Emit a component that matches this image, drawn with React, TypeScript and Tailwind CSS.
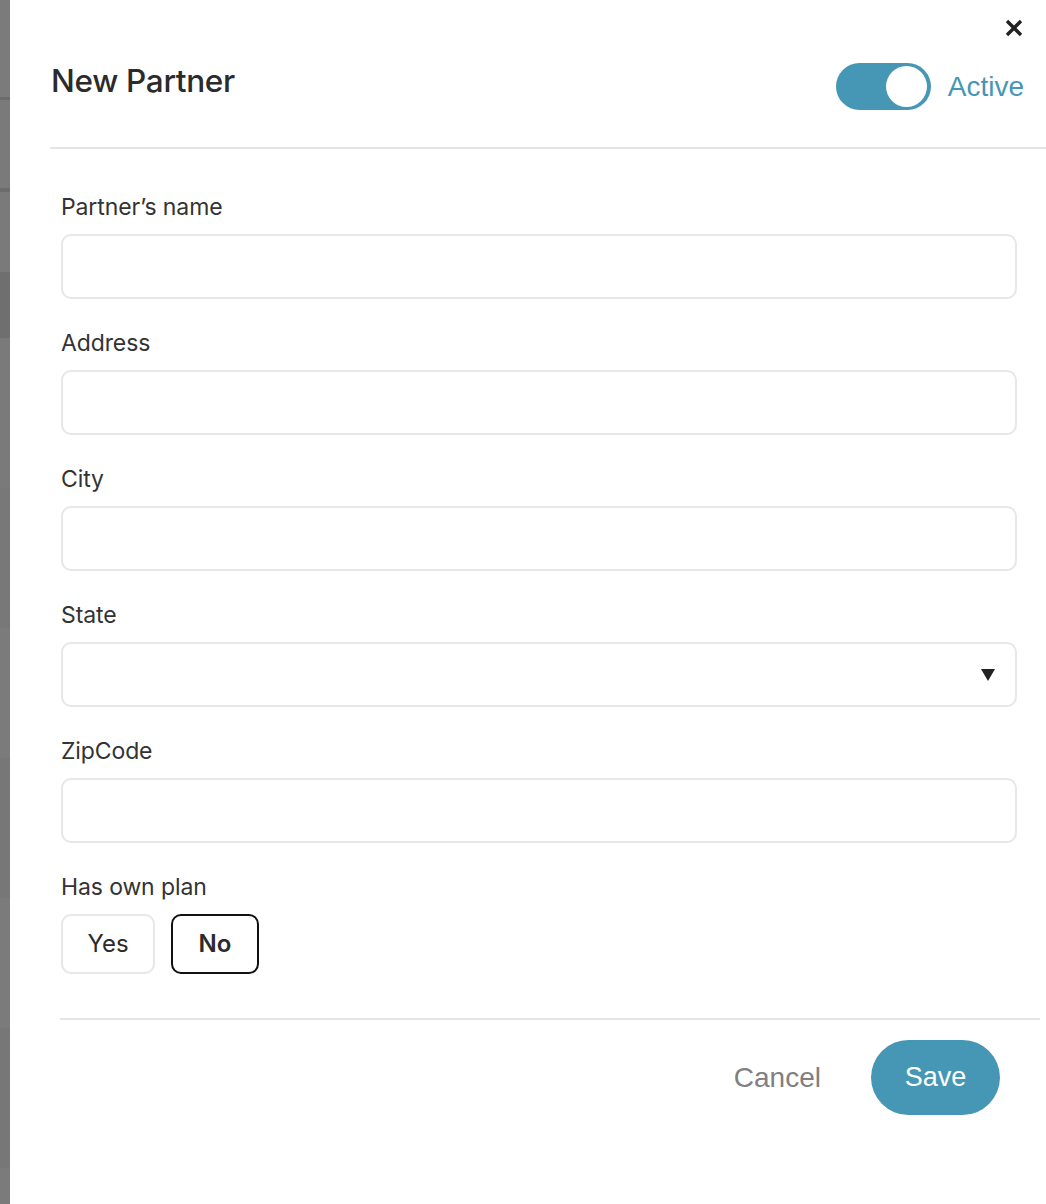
import React from "react";

const inter = { fontFamily: "Inter, 'Noto Sans', sans-serif" };

function Field({ label, select }: { label: string; select?: boolean }) {
  return (
    <div className="flex flex-col">
      <label className="block text-[23px] leading-[28px] text-[#333333] mb-[13px] tracking-[-0.005em]">{label}</label>
      <div className="relative flex items-center h-[65px] w-full rounded-[10px] border-2 border-[#e7e7e7] bg-white">
        {select && (
          <svg className="absolute right-[20px]" width="14" height="12" viewBox="0 0 14 12">
            <path d="M0 0 L14 0 L7 12 Z" fill="#222222" />
          </svg>
        )}
      </div>
    </div>
  );
}

export default function App() {
  return (
    <div className="flex w-full h-[1204px] overflow-hidden" style={inter}>
      <div className="w-[10px] flex flex-col bg-[#7a7a7a]">
        <div className="h-[97px] bg-[#7b7b7b]" />
        <div className="h-[3px] bg-[#6c6c6c]" />
        <div className="h-[88px] bg-[#7a7a7a]" />
        <div className="h-[4px] bg-[#6c6c6c]" />
        <div className="h-[80px] bg-[#7a7a7a]" />
        <div className="h-[66px] bg-[#6f6f6f]" />
        <div className="h-[150px] bg-[#7a7a7a]" />
        <div className="h-[140px] bg-[#787878]" />
        <div className="h-[130px] bg-[#7b7b7b]" />
        <div className="h-[140px] bg-[#777777]" />
        <div className="h-[130px] bg-[#7b7b7b]" />
        <div className="h-[140px] bg-[#777777]" />
        <div className="flex-1 bg-[#7b7b7b]" />
      </div>
      <div className="flex-1 flex flex-col bg-white">
        <div className="flex justify-end pt-[19px] pr-[23px] h-[40px]">
          <button className="w-[18px] h-[18px]">
            <svg width="18" height="18" viewBox="0 0 18 18">
              <path d="M2 2 L16 16 M16 2 L2 16" stroke="#222222" strokeWidth="3.4" strokeLinecap="butt" />
            </svg>
          </button>
        </div>
        <div className="ml-[40px] flex items-start justify-between border-b-2 border-[#e2e5e9] pb-[37px] pr-[22px]">
          <h1 className="mt-[23px] ml-[1px] text-[31.5px] leading-[36px] font-medium text-[#2b2b2b] tracking-[-0.01em]">New Partner</h1>
          <div className="mt-[23px] flex items-center gap-[17px]">
            <div className="flex items-center justify-end w-[95px] h-[47px] rounded-full bg-[#4597b5] pr-[4px]">
              <div className="w-[41px] h-[41px] rounded-full bg-white" />
            </div>
            <span className="text-[28px] leading-[32px] text-[#4597b5]" style={{ fontFamily: "'Liberation Sans', Arial, sans-serif" }}>Active</span>
          </div>
        </div>
        <div className="ml-[51px] mr-[29px] pt-[44px] flex flex-col gap-[30px]">
          <Field label="Partner’s name" />
          <Field label="Address" />
          <Field label="City" />
          <Field label="State" select />
          <Field label="ZipCode" />
          <div className="flex flex-col">
            <span className="block text-[23px] leading-[28px] text-[#333333] mb-[13px] tracking-[-0.005em]">Has own plan</span>
            <div className="flex gap-[16px]">
              <button className="h-[60px] w-[94px] rounded-[10px] border-2 border-[#e7e7e7] text-[24px] text-[#2b2b2b]">Yes</button>
              <button className="h-[60px] w-[88px] rounded-[10px] border-2 border-[#111111] text-[24px] font-semibold text-[#2b2b2b]">No</button>
            </div>
          </div>
        </div>
        <div className="mt-[44px] ml-[50px] mr-[6px] h-[2px] bg-[#e2e5e9]" />
        <div className="mt-[20px] flex justify-end items-center gap-[50px] pr-[46px]" style={{ fontFamily: "'Liberation Sans', Arial, sans-serif" }}>
          <button className="text-[28px] text-[#808080]">Cancel</button>
          <button className="w-[129px] h-[75px] rounded-full bg-[#4597b5] text-white text-[27px]">Save</button>
        </div>
      </div>
    </div>
  );
}
